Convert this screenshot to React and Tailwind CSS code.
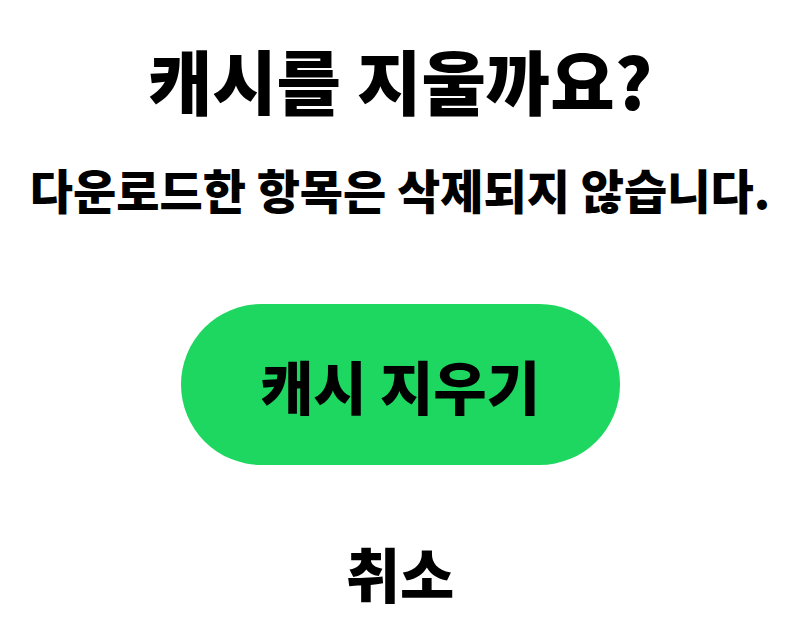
import React from 'react';

const ClearCacheDialog = () => {
  return (
    <div
      className="w-[800px] h-[618px] bg-white flex flex-col items-center text-black font-black"
      style={{ fontFamily: '"Noto Sans CJK KR", "Noto Sans", sans-serif' }}
    >
      <h1 className="mt-[45px] text-[70px] leading-none">캐시를 지울까요?</h1>
      <p className="mt-[50px] text-[47px] leading-none">다운로드한 항목은 삭제되지 않습니다.</p>
      <button className="mt-[92px] w-[439px] h-[161px] rounded-full bg-[#1ed760] text-[58px] leading-none">
        캐시 지우기
      </button>
      <button className="mt-[78px] text-[59px] leading-none">취소</button>
    </div>
  );
};

export default ClearCacheDialog;
